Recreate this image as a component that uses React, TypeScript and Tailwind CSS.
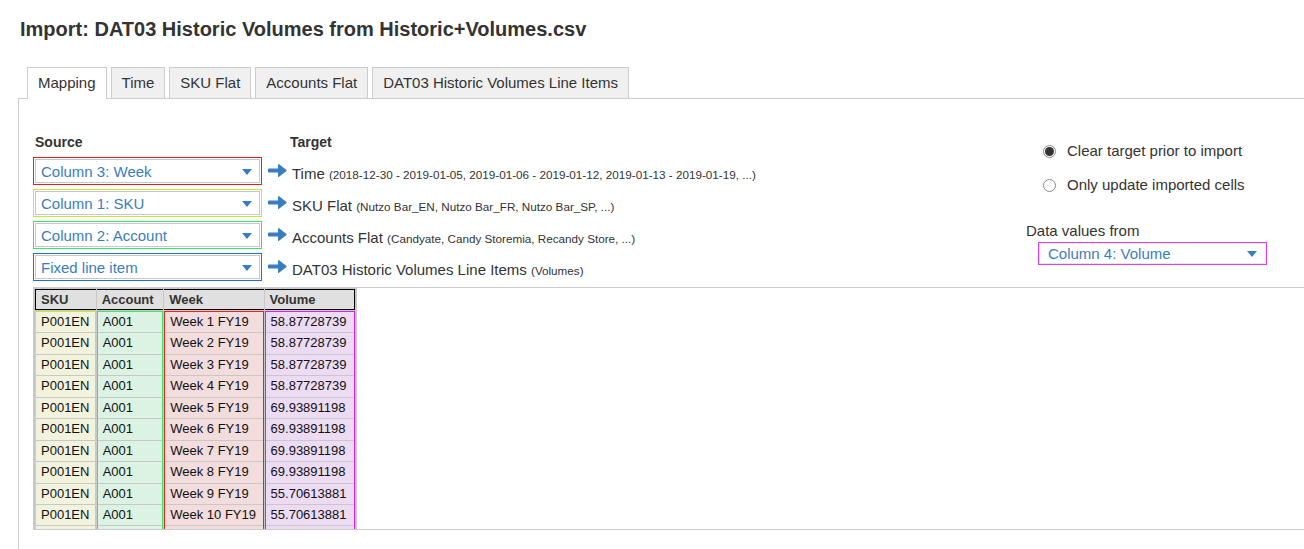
const tabs = ["Mapping", "Time", "SKU Flat", "Accounts Flat", "DAT03 Historic Volumes Line Items"];

const mappings = [
  { source: "Column 3: Week", ring: "border-[#e81c24]", target: "Time", detail: "(2018-12-30 - 2019-01-05, 2019-01-06 - 2019-01-12, 2019-01-13 - 2019-01-19, ...)" },
  { source: "Column 1: SKU", ring: "border-[#cde62e]", target: "SKU Flat", detail: "(Nutzo Bar_EN, Nutzo Bar_FR, Nutzo Bar_SP, ...)" },
  { source: "Column 2: Account", ring: "border-[#2ee866]", target: "Accounts Flat", detail: "(Candyate, Candy Storemia, Recandy Store, ...)" },
  { source: "Fixed line item", ring: "border-[#1f6ee6]", target: "DAT03 Historic Volumes Line Items", detail: "(Volumes)" },
];

const volumes = [
  "58.87728739", "58.87728739", "58.87728739", "58.87728739",
  "69.93891198", "69.93891198", "69.93891198", "69.93891198",
  "55.70613881", "55.70613881", "55.70613881",
];

const columns = [
  { head: "SKU", w: "w-[61px]", box: "bg-[#f1f3dd] border-l border-t border-r border-l-[#cde62e] border-t-[#cde62e] border-r-[#c8c8c8]", cell: () => "P001EN" },
  { head: "Account", w: "w-[67px]", box: "bg-[#dcf2e3] border-x border-t border-[#3ce86c]", cell: () => "A001" },
  { head: "Week", w: "w-[100px]", box: "bg-[#f2dcdc] border-x border-t border-[#e82424]", cell: (i: number) => `Week ${i + 1} FY19` },
  { head: "Volume", w: "w-[91px]", box: "bg-[#eddbf3] border-x border-t border-[#d622e6]", cell: (i: number) => volumes[i] },
];

function Caret() {
  return (
    <svg width="10" height="6" viewBox="0 0 10 6" className="shrink-0">
      <path d="M0 0 H10 L5 6 Z" fill="#3a7dbf" />
    </svg>
  );
}

function Arrow() {
  return (
    <svg width="19" height="15" viewBox="0 0 19 15" className="shrink-0">
      <path d="M1 5.5 H10 V1.5 Q10 0.5 11 1.2 L18.3 6.8 Q19 7.5 18.3 8.2 L11 13.8 Q10 14.5 10 13.5 V9.5 H1 Q0 9.5 0 8.5 V6.5 Q0 5.5 1 5.5 Z" fill="#3a7dbf" />
    </svg>
  );
}

function Radio({ checked, label }: { checked?: boolean; label: string }) {
  return (
    <div className="flex h-[20px] items-center pl-[17px]">
      <span className="flex h-[13px] w-[13px] items-center justify-center rounded-full border border-[#8a8a8a] bg-white">
        {checked && <span className="h-[9px] w-[9px] rounded-full bg-[#333]" />}
      </span>
      <span className="ml-[11px] text-[15px]">{label}</span>
    </div>
  );
}

export default function App() {
  return (
    <div className="min-h-screen overflow-hidden bg-white font-['Liberation_Sans',Arial,sans-serif] text-[#333]">
      <h1 className="pl-[20px] pt-[17px] text-[20px] font-bold leading-[24px]">
        Import: DAT03 Historic Volumes from Historic+Volumes.csv
      </h1>

      <div className="ml-[18px] mt-[26px]">
        <div className="flex gap-[4px] border-b border-[#cccccc] pl-[9px]">
          {tabs.map((t, i) => (
            <div
              key={t}
              className={
                i === 0
                  ? "-mb-px border border-b-0 border-[#cccccc] bg-white px-[10px] pb-[7px] pt-[6px] text-[15px] leading-[18px]"
                  : "border border-b-0 border-[#cccccc] bg-[#f0f0f0] px-[10px] pb-[6px] pt-[6px] text-[15px] leading-[18px]"
              }
            >
              {t}
            </div>
          ))}
        </div>

        <div className="h-[460px] border-l border-[#cccccc]">
          <div className="flex items-start pt-[35px]">
            <div className="flex-1 pl-[14px]">
              <div className="flex h-[16px] items-center text-[14px] font-bold">
                <span className="w-[257px] pl-[2px]">Source</span>
                <span>Target</span>
              </div>
              <div className="mt-[7px] flex flex-col gap-[4px]">
                {mappings.map((m) => (
                  <div key={m.source} className="flex h-[28px] items-center">
                    <div className={`h-[28px] w-[229px] border bg-white p-px ${m.ring}`}>
                      <div className="flex h-full items-center justify-between border border-[#c8c8c8] pl-[5px] pr-[7px] pt-px text-[15px] leading-[18px] text-[#3a7dbf]">
                        <span>{m.source}</span>
                        <Caret />
                      </div>
                    </div>
                    <div className="ml-[6px] -mt-[2px]">
                      <Arrow />
                    </div>
                    <div className="ml-[5px] mt-[6px] h-[18px] whitespace-nowrap text-[15px] leading-[18px]">
                      {m.target} <span className="text-[11.7px] leading-[18px]">{m.detail}</span>
                    </div>
                  </div>
                ))}
              </div>
            </div>

            <div className="w-[278px] shrink-0">
              <div className="mt-[7px]">
                <Radio checked label="Clear target prior to import" />
              </div>
              <div className="mt-[14px]">
                <Radio label="Only update imported cells" />
              </div>
              <div className="mt-[27px] text-[15px] leading-[18px]">Data values from</div>
              <div className="ml-[12px] mt-[2px] h-[23px] w-[229px] border border-[#e040ea] bg-white">
                <div className="flex h-full items-center justify-between border border-[#e6e6e6] pl-[8px] pr-[8px] pt-px text-[15px] leading-[18px] text-[#3a7dbf]">
                  <span>Column 4: Volume</span>
                  <Caret />
                </div>
              </div>
            </div>
          </div>

          <div className="ml-[14px] mt-[6px] h-[243px] overflow-hidden border-y border-[#cccccc]">
            <div className="w-[324px] bg-[#c8c8c8] pl-[2px] pr-[2px] pt-px">
              <div className="flex gap-px">
                {columns.map((c, i) => (
                  <div
                    key={c.head}
                    className={`${c.w} h-[21px] border-y border-black bg-[#e0e0e0] pl-[5px] text-[13px] font-bold leading-[19px] ${i === 0 ? "border-l" : ""} ${i === columns.length - 1 ? "border-r" : ""}`}
                  >
                    {c.head}
                  </div>
                ))}
              </div>
              <div className="mt-px flex gap-px">
                {columns.map((c) => (
                  <div key={c.head} className={`${c.w} ${c.box}`}>
                    {volumes.map((_, i) => (
                      <div
                        key={i}
                        className="h-[21.45px] whitespace-nowrap border-b border-[#c8c8c8] pl-[5px] text-[13px] leading-[19px] text-[#111]"
                      >
                        {c.cell(i)}
                      </div>
                    ))}
                  </div>
                ))}
              </div>
            </div>
          </div>
        </div>
      </div>
    </div>
  );
}
